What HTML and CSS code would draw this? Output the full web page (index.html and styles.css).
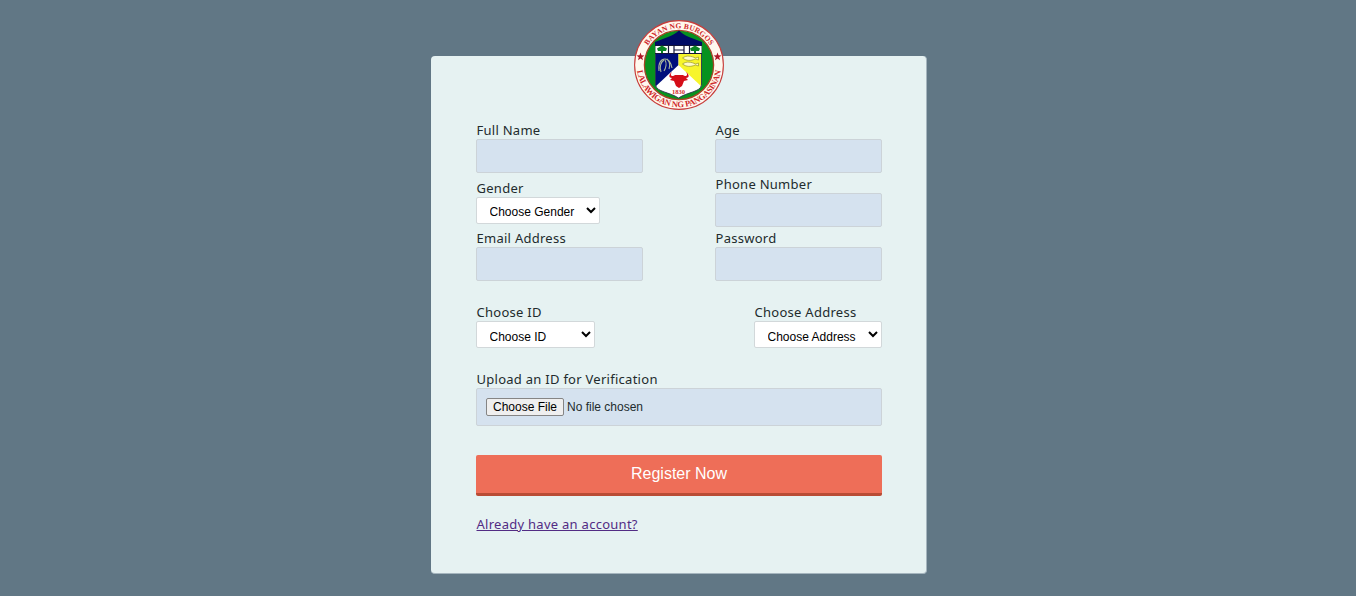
FILE: index.html
```html
<!DOCTYPE html>
<html lang="en">
<head>
<meta charset="utf-8">
<title>Register</title>
<link rel="stylesheet" href="styles.css">
</head>
<body>
<main class="card">
  <svg class="seal" viewBox="0 0 90 90" role="img" aria-label="Bayan ng Burgos seal">
    <defs>
      <path id="arc-top" d="M8.300 45a36.700 36.700 0 0 1 73.400 0"/>
      <path id="arc-bottom" d="M2.800 45a42.200 42.200 0 0 0 84.400 0"/>
      <clipPath id="shield"><path d="M21.500 24h46v41c-1 7-14 7-23 13-9-6-22-6-23-13z"/></clipPath>
    </defs>
    <circle cx="45" cy="45" r="44.4" fill="#fff8ee" stroke="#c73c3a" stroke-width="1.1"/>
    <circle cx="45" cy="45" r="34.6" fill="#07921f" stroke="#a64326" stroke-width="1.3"/>
    <g clip-path="url(#shield)">
      <path fill="#fff" d="M21 24h48v57H21z"/>
      <path fill="#000f7c" d="M21 34h23.500v11L21 67z"/>
      <path fill="#f7f52b" d="M44.500 34H68v33L44.500 45z"/>
    </g>
    <path d="M21.500 24v41c1 7 14 7 23 13 9-6 22-6 23-13V24" fill="none" stroke="#27324c" stroke-width=".9"/>
    <path fill="#000b65" d="M45 10.500c-3 3-7 5-11 6.500l-13 5v3h47v-3l-13-5c-4-1.500-7-3.500-10-6.500z"/>
    <path fill="#fff" d="M21.500 25.500h46V33h-46z"/>
    <path d="M21 25.500h47M21 33.500h47M34.500 26v7M40 26v7M50 26v7M55.500 26v7M40 30h10" stroke="#15153a" stroke-width="1.2" fill="none"/>
    <path fill="#098223" d="M28 25.500l5 3-1 2.500h-3v2h-2v-2h-3l-1-2.500zM61 25.500l5 3-1 2.500h-3v2h-2v-2h-3l-1-2.500z"/>
    <path d="M25 51c-1-8 2-12 6-12 4 0 6 4 7 9M27 52c-2-5 0-10 3-12M31 40c2 3 1 8-1 11M33 39c3 3 3 7 2 10" fill="none" stroke="#a9b79c" stroke-width="1.1"/>
    <path d="M48.500 38c4-3 9-2 13 0l3-1v3l-3-1c-5 2-9 2-13-1zM48.500 44c4-3 9-2 13 0l3-1v3l-3-1c-5 2-9 2-13-1z" fill="#fffbc4" stroke="#969526" stroke-width=".7"/>
    <path fill="#d50d18" d="M38 52c-3 4 1 5 3 3h8c2 2 6 1 3-3 4 3 3 6 0 6l2 2-4 1-2 5-3 2-3-2-2-5-4-1 2-2c-3 0-4-3 0-6z"/>
    <text class="seal-year" x="44.500" y="74">1830</text>
    <text class="seal-name"><textPath href="#arc-top" startOffset="50%" textLength="74">BAYAN NG BURGOS</textPath></text>
    <text class="seal-province"><textPath href="#arc-bottom" startOffset="50%" textLength="121">LALAWIGAN NG PANGASINAN</textPath></text>
    <path id="star" fill="#ae1726" d="M6.500 32.500l1 2.800 3 .1-2.300 1.800.8 3-2.500-1.700L4 40.200l.8-3-2.300-1.800 3-.1z"/>
    <use href="#star" x="77"/>
  </svg>
  <form class="form">
    <div class="row">
      <div class="field"><label for="name">Full Name</label><input id="name" class="input" type="text"></div>
      <div class="field"><label for="age">Age</label><input id="age" class="input" type="text"></div>
    </div>
    <div class="row">
      <div class="field field-gender"><label for="gender">Gender</label><select id="gender" class="select gender"><option>Choose Gender</option></select></div>
      <div class="field"><label for="phone">Phone Number</label><input id="phone" class="input" type="text"></div>
    </div>
    <div class="row">
      <div class="field"><label for="email">Email Address</label><input id="email" class="input" type="email"></div>
      <div class="field"><label for="password">Password</label><input id="password" class="input" type="password"></div>
    </div>
    <div class="row choices">
      <div class="field"><label for="id-type">Choose ID</label><select id="id-type" class="select id-type"><option>Choose ID</option></select></div>
      <div class="field"><label for="address">Choose Address</label><select id="address" class="select address"><option>Choose Address</option></select></div>
    </div>
    <div class="field upload">
      <span class="label">Upload an ID for Verification</span>
      <div class="file"><button class="file-button" type="button">Choose File</button><span>No file chosen</span></div>
    </div>
    <button class="submit" type="button">Register Now</button>
    <a class="login" href="#">Already have an account?</a>
  </form>
</main>
</body>
</html>
```
FILE: styles.css
```css
* { box-sizing: border-box; }
body {
  margin: 0;
  padding-top: 56px;
  min-height: 596px;
  background: #617785;
  color: #222b2d;
  font: 13px/18px "Noto Sans", sans-serif;
  letter-spacing: .27px;
}
.card {
  width: 496px;
  height: 518px;
  position: relative;
  margin: 0 auto 0 431px;
  padding: 65px 44px 0 45px;
  background: #e6f2f2;
  border: 1px solid #a5b5be;
  border-width: 0 1px 1px 0;
  border-radius: 4px;
}
.seal {
  position: absolute;
  top: -36px;
  left: 203px;
  width: 90px;
  height: 90px;
}
.seal text {
  font-family: "Liberation Serif", serif;
  font-weight: bold;
  letter-spacing: 0;
  text-anchor: middle;
  fill: #cf2729;
}
.seal .seal-year { font-size: 6.5px; }
.seal .seal-name { font-size: 7.5px; }
.seal .seal-province { font-size: 8.5px; }
.row { display: flex; justify-content: space-between; height: 54px; }
.field { display: flex; flex-direction: column; align-items: flex-start; }
.field label, .label { padding-left: .5px; }
.field-gender { padding-top: 4px; }
.input {
  width: 167px;
  height: 34px;
  margin: 0;
  border: 1px solid #ccd3d8;
  border-radius: 2px;
  background: #d5e2ef;
}
.select {
  height: 27px;
  margin: 0;
  padding: 2px 0 0 8.5px;
  border: 1px solid #d2d8da;
  border-radius: 2px;
  background: #fff;
  color: #000;
  font: 12px "Liberation Sans", sans-serif;
}
.gender { width: 124px; }
.id-type { width: 119px; padding-top: 4px; }
.address { width: 128px; padding-top: 4px; }
.choices { height: 67px; margin-top: 20px; }
.file {
  display: flex;
  align-items: center;
  gap: 3px;
  width: 100%;
  height: 38px;
  padding-left: 9px;
  border: 1px solid #ccd3d8;
  border-radius: 2px;
  background: #d5e2ef;
  font: 12px "Liberation Sans", sans-serif;
  letter-spacing: 0;
}
.file-button {
  width: 78px;
  height: 18px;
  padding: 0;
  border: 1px solid #858585;
  border-radius: 2px;
  background: #efefef;
  color: #000;
  font: inherit;
}
.submit {
  display: block;
  width: 100%;
  height: 41px;
  margin: 29px 0 19px;
  padding: 0 0 1px;
  border: 0;
  border-bottom: 3px solid #b94c35;
  border-radius: 2px;
  background: #ee6e58;
  color: #fff;
  font: 16px "Liberation Sans", sans-serif;
}
.login { margin-left: .5px; color: #522c84; }
```
